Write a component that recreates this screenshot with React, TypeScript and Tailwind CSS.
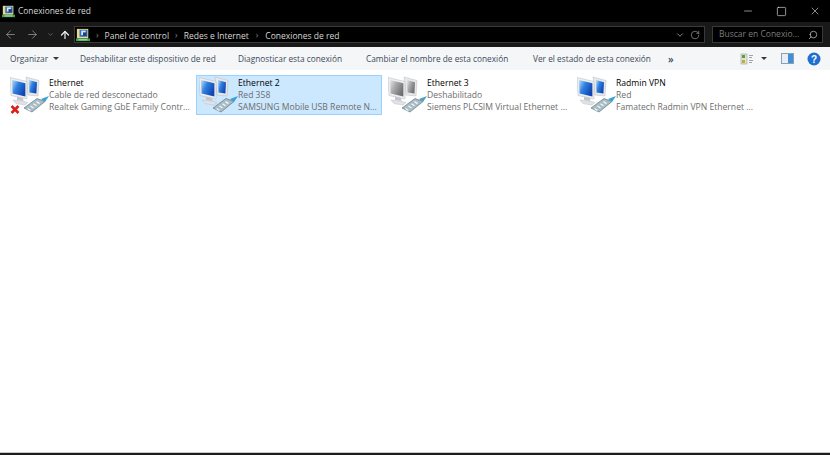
import { ArrowLeft, ArrowRight, ArrowUp, ChevronDown, RotateCw, Search, Minus, Square, X } from 'lucide-react';

const font = { fontFamily: '"Open Sans", "Noto Sans", sans-serif' };

function FolderIcon({ size = 16 }: { size?: number }) {
  return (
    <svg width={size} height={size} viewBox="0 0 16 16" className="shrink-0">
      <rect x="1" y="1" width="13" height="11" fill="#e9d98a" />
      <rect x="4" y="2" width="9" height="8" fill="#2f6fc4" />
      <rect x="6" y="3" width="5" height="5" fill="#dfe9f5" />
      <rect x="8" y="5" width="4" height="4" fill="#1c3f88" />
      <rect x="0" y="12" width="16" height="3" fill="#3aa655" />
      <rect x="3" y="13" width="10" height="1" fill="#d8e8c8" />
    </svg>
  );
}

function NetworkIcon({ gray = false, error = false }: { gray?: boolean; error?: boolean }) {
  const id = gray ? 'scr-gray' : 'scr-blue';
  const stops = gray ? ['#e8e8e8', '#a8a8a8', '#6e6e6e'] : ['#bfe0fa', '#2f80e0', '#0f45b0'];
  return (
    <svg width="42" height="40" viewBox="0 0 42 40" className="shrink-0">
      <defs>
        <linearGradient id={id} x1="0" y1="0" x2="1" y2="0.6">
          <stop offset="0" stopColor={stops[0]} />
          <stop offset="0.45" stopColor={stops[1]} />
          <stop offset="1" stopColor={stops[2]} />
        </linearGradient>
      </defs>
      {/* back monitor */}
      <path d="M16 2 L29 5.5 L28 21 L18 20 Z" fill="#e6e8ea" stroke="#b4b9be" strokeWidth="0.5" />
      <path d="M19 5 L27 7.2 L26.4 18.6 L19.5 17.6 Z" fill={`url(#${id})`} />
      {/* front monitor */}
      <path d="M0 2.5 L17 6.5 L17 24 L1 20.5 Z" fill="#eceef0" stroke="#b4b9be" strokeWidth="0.5" />
      <path d="M2 5 L15.4 8.2 L15.4 21.6 L2.6 18.6 Z" fill={`url(#${id})`} />
      {/* base */}
      <path d="M7 21.5 L13 23 L13.5 26 L7 25 Z" fill="#c3c6ca" />
      <path d="M3 25 L12 26 L18 27.5 L15 30 L6 28.6 Z" fill="#e0e2e5" stroke="#bcbfc4" strokeWidth="0.5" />
      {/* connector */}
      <path d="M14 33 L27 23.5 L35 26.5 L22 37 Z" fill="#a9bcc5" stroke="#5f7a86" strokeWidth="0.7" />
      <path d="M17.5 33.5 L20.5 35.5 M20.5 31 L23.5 33 M23.5 28.8 L26.5 30.8 M26.5 26.6 L29.5 28.6" stroke="#f4f7f8" strokeWidth="1.3" />
      <path d="M31 24 L39 21 L35 27 Z" fill={gray ? '#4f9fc0' : '#3aa0d8'} />
      {error && (
        <path d="M1.5 31 L8.5 38 M8.5 31 L1.5 38" stroke="#d9201c" strokeWidth="2.6" />
      )}
    </svg>
  );
}

type Conn = { name: string; status: string; device: string; gray?: boolean; error?: boolean; selected?: boolean };

const conns: Conn[] = [
  { name: 'Ethernet', status: 'Cable de red desconectado', device: 'Realtek Gaming GbE Family Contr...', error: true },
  { name: 'Ethernet 2', status: 'Red 358', device: 'SAMSUNG Mobile USB Remote N...', selected: true },
  { name: 'Ethernet 3', status: 'Deshabilitado', device: 'Siemens PLCSIM Virtual Ethernet ...', gray: true },
  { name: 'Radmin VPN', status: 'Red', device: 'Famatech Radmin VPN Ethernet ...' },
];

const actions = [
  { label: 'Deshabilitar este dispositivo de red', w: 'w-[158px]' },
  { label: 'Diagnosticar esta conexión', w: 'w-[128px]' },
  { label: 'Cambiar el nombre de esta conexión', w: 'w-[167px]' },
  { label: 'Ver el estado de esta conexión', w: 'w-[135px]' },
];

export default function App() {
  return (
    <div className="h-[455px] w-[830px] flex flex-col bg-white overflow-hidden" style={font}>
      {/* title bar */}
      <div className="h-[22px] bg-black flex items-center pl-[2px] text-[8.4px] text-[#d8d8d8]">
        <FolderIcon size={13} />
        <span className="ml-[3px] flex-1">Conexiones de red</span>
        <div className="flex items-center gap-[22px] pr-[9px] text-[#e6e6e6]">
          <Minus size={12} strokeWidth={1.2} />
          <Square size={11} strokeWidth={1.4} />
          <X size={12} strokeWidth={1.2} />
        </div>
      </div>

      {/* address bar */}
      <div className="h-[25px] bg-[#191919] flex items-center pl-[4px] pr-[7px] text-[8.5px]">
        <ArrowLeft size={13} strokeWidth={1.4} className="text-[#9a9a9a]" />
        <ArrowRight size={13} strokeWidth={1.4} className="ml-[9px] text-[#9a9a9a]" />
        <ChevronDown size={7} strokeWidth={2} className="ml-[8px] text-[#8a8a8a]" />
        <ArrowUp size={12} strokeWidth={2.4} className="ml-[5px] text-[#f2f2f2]" />
        <div className="ml-[3px] h-[17px] w-[631px] bg-black border border-[#3a3a3a] flex items-center pl-[1px] leading-[17px] text-[#d6d6d6]">
          <FolderIcon size={14} />
          <span className="ml-[6px] text-[#888]">›</span>
          <span className="ml-[6px] pt-[1px]">Panel de control</span>
          <span className="ml-[6px] text-[#888]">›</span>
          <span className="ml-[6px] pt-[1px]">Redes e Internet</span>
          <span className="ml-[7px] text-[#888]">›</span>
          <span className="ml-[7px] pt-[1px] flex-1">Conexiones de red</span>
          <ChevronDown size={10} strokeWidth={2} className="text-[#a0a0a0]" />
          <RotateCw size={10} strokeWidth={1.6} className="ml-[5px] mr-[4px] text-[#a0a0a0]" />
        </div>
        <div className="ml-[7px] h-[17px] flex-1 bg-black border border-[#3a3a3a] flex items-center pl-[6px] pr-[4px] text-[#7c7c7c]">
          <span className="flex-1 whitespace-nowrap">Buscar en Conexio...</span>
          <Search size={10} strokeWidth={1.8} className="text-[#c0c0c0] -scale-x-100" />
        </div>
      </div>

      {/* command bar */}
      <div className="h-[23px] bg-[#f5f6f7] flex items-center pl-[10px] pr-[9px] text-[8.3px] text-[#3a4a5c]">
        <span className="w-[40px] pt-[1px] whitespace-nowrap">Organizar</span>
        <span className="ml-[3px] border-x-[3px] border-t-[3px] border-x-transparent border-t-[#2a3a4c]" />
        <div className="ml-[21px] flex items-center pt-[1px]">
          {actions.map((a) => (
            <span key={a.label} className={`${a.w} whitespace-nowrap`}>{a.label}</span>
          ))}
        </div>
        <span className="text-[10px] font-semibold leading-none">»</span>
        <div className="ml-auto flex items-center">
          <svg width="14" height="12" viewBox="0 0 14 12">
            <rect x="1" y="1" width="6" height="10" fill="#dfe6c8" stroke="#9aa0a6" strokeWidth="0.6" />
            <rect x="2" y="2" width="3" height="3" fill="#5a9a4a" />
            <rect x="2" y="7" width="3" height="3" fill="#c9a93a" />
            <path d="M9 2.5h4M9 4.5h3M9 7.5h4M9 9.5h3" stroke="#8a9098" strokeWidth="0.8" />
          </svg>
          <span className="ml-[7px] border-x-[3px] border-t-[3px] border-x-transparent border-t-[#2a3a4c]" />
          <svg width="13" height="11" viewBox="0 0 13 11" className="ml-[14px]">
            <rect x="0.5" y="0.5" width="12" height="10" fill="#e8eef4" stroke="#8aa0b4" />
            <rect x="7" y="1" width="5" height="9" fill="#3f8fd8" />
          </svg>
          <svg width="14" height="14" viewBox="0 0 14 14" className="ml-[13px]">
            <circle cx="7" cy="7" r="6.5" fill="#1f6fd0" />
            <text x="7" y="10.5" textAnchor="middle" fontSize="10" fontWeight="700" fill="#fff" fontFamily="Liberation Sans, sans-serif">?</text>
          </svg>
        </div>
      </div>

      {/* connections */}
      <div className="flex-1 flex items-start pt-[5px] pl-[7px]">
        {conns.map((c) => (
          <div key={c.name} className="w-[189px]">
            <div
              className={`w-[186px] h-[40px] flex items-center pl-[2px] border ${
                c.selected ? 'bg-[#cce8ff] border-[#99d1ff]' : 'border-transparent'
              }`}
            >
              <NetworkIcon gray={c.gray} error={c.error} />
              <div className="ml-[-3px] text-[8.6px] leading-[12px] whitespace-nowrap">
                <div className="text-black">{c.name}</div>
                <div className="text-[#6d6d6d]">{c.status}</div>
                <div className="text-[#6d6d6d]">{c.device}</div>
              </div>
            </div>
          </div>
        ))}
      </div>

      {/* bottom edge */}
      <div className="h-[3px] bg-[#1c1c1c] border-t border-[#c8c8c8]" />
    </div>
  );
}
